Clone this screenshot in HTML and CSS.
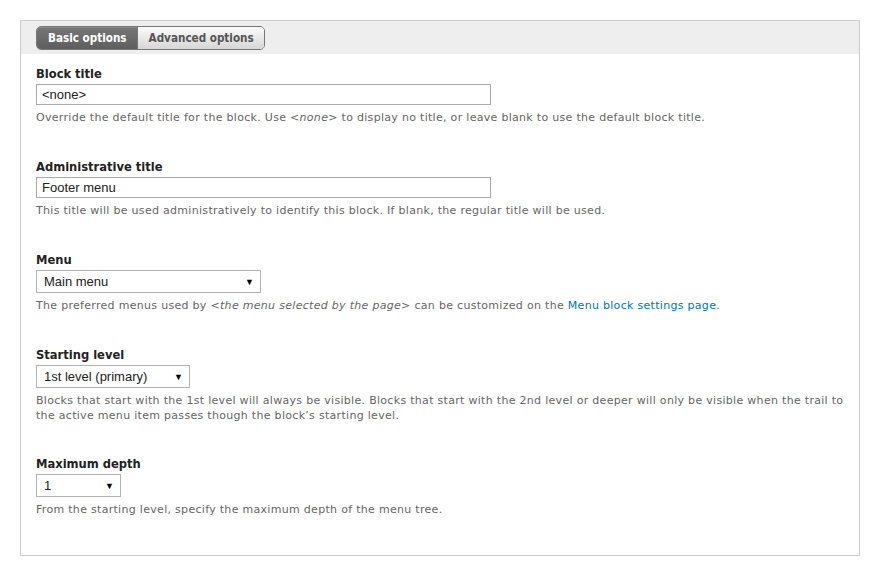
FILE: index.html
```html
<!DOCTYPE html>
<html>
<head>
<meta charset="utf-8">
<link rel="stylesheet" href="styles.css">
</head>
<body>
<div class="panel">
  <div class="tabbar">
    <div class="tabs">
      <span class="tab active">Basic options</span><span class="tab">Advanced options</span>
    </div>
  </div>
  <div class="body">
    <div class="item">
      <label class="label">Block title</label>
      <div class="input wide">&lt;none&gt;</div>
      <div class="desc">Override the default title for the block. Use <em>&lt;none&gt;</em> to display no title, or leave blank to use the default block title.</div>
    </div>
    <div class="item">
      <label class="label">Administrative title</label>
      <div class="input wide">Footer menu</div>
      <div class="desc">This title will be used administratively to identify this block. If blank, the regular title will be used.</div>
    </div>
    <div class="item">
      <label class="label">Menu</label>
      <div class="select s-menu"><span>Main menu</span><span class="arrow">▼</span></div>
      <div class="desc">The preferred menus used by <em>&lt;the menu selected by the page&gt;</em> can be customized on the <a href="#">Menu block settings page</a>.</div>
    </div>
    <div class="item">
      <label class="label">Starting level</label>
      <div class="select s-level"><span>1st level (primary)</span><span class="arrow">▼</span></div>
      <div class="desc">Blocks that start with the 1st level will always be visible. Blocks that start with the 2nd level or deeper will only be visible when the trail to the active menu item passes though the block’s starting level.</div>
    </div>
    <div class="item last">
      <label class="label">Maximum depth</label>
      <div class="select s-depth"><span>1</span><span class="arrow">▼</span></div>
      <div class="desc">From the starting level, specify the maximum depth of the menu tree.</div>
    </div>
  </div>
</div>
</body>
</html>
```
FILE: styles.css
```css
html, body { margin: 0; padding: 0; background: #fff; }
body { padding: 20px; font-family: "DejaVu Sans", Verdana, sans-serif; color: #333; }
.panel { border: 1px solid #ccc; height: 534px; box-sizing: content-box; }
.tabbar { background: #eee; height: 33px; padding: 5px 0 0 15px; box-sizing: border-box; }
.tabs { display: inline-flex; border: 1px solid #777; border-radius: 5px; overflow: hidden; height: 24px; box-sizing: border-box; }
.tab { font-family: "DejaVu Sans Condensed", "DejaVu Sans", sans-serif; font-weight: bold; font-size: 11.6px; line-height: 22px; padding: 0 10px 0 11px; color: #555; background: linear-gradient(#fcfcfc, #d6d6d6); }
.tab.active { background: linear-gradient(#777, #5e5e5e); color: #fff; border-right: 1px solid #777; box-shadow: inset 0 1px 0 #8a8a8a; }
.body { padding: 12px 15px 0 15px; }
.item { margin-bottom: 34px; }
.item.last { margin-bottom: 0; margin-top: -1px; }
.label { display: block; font-family: "DejaVu Sans Condensed", "DejaVu Sans", sans-serif; font-weight: bold; font-size: 12.8px; color: #222; line-height: 16px; margin-bottom: 2px; }
.input { font-family: "Liberation Sans", Arial, sans-serif; font-size: 13px; color: #222; border: 1px solid #aaa; height: 21px; line-height: 19px; padding: 0 5px; box-sizing: border-box; }
.wide { width: 455px; }
.select { display: flex; justify-content: space-between; align-items: center; font-family: "Liberation Sans", Arial, sans-serif; font-size: 13px; color: #222; border: 1px solid #b4b4b4; height: 23px; padding: 0 6px 0 7px; box-sizing: border-box; }
.arrow { font-size: 9px; color: #000; }
.s-menu { width: 225px; }
.s-level { width: 154px; }
.s-depth { width: 85px; }
.desc { font-size: 11px; letter-spacing: 0.3px; color: #666; line-height: 15px; margin-top: 5px; }
.desc em { font-style: italic; }
.desc a { color: #0074bd; text-decoration: none; }
```
